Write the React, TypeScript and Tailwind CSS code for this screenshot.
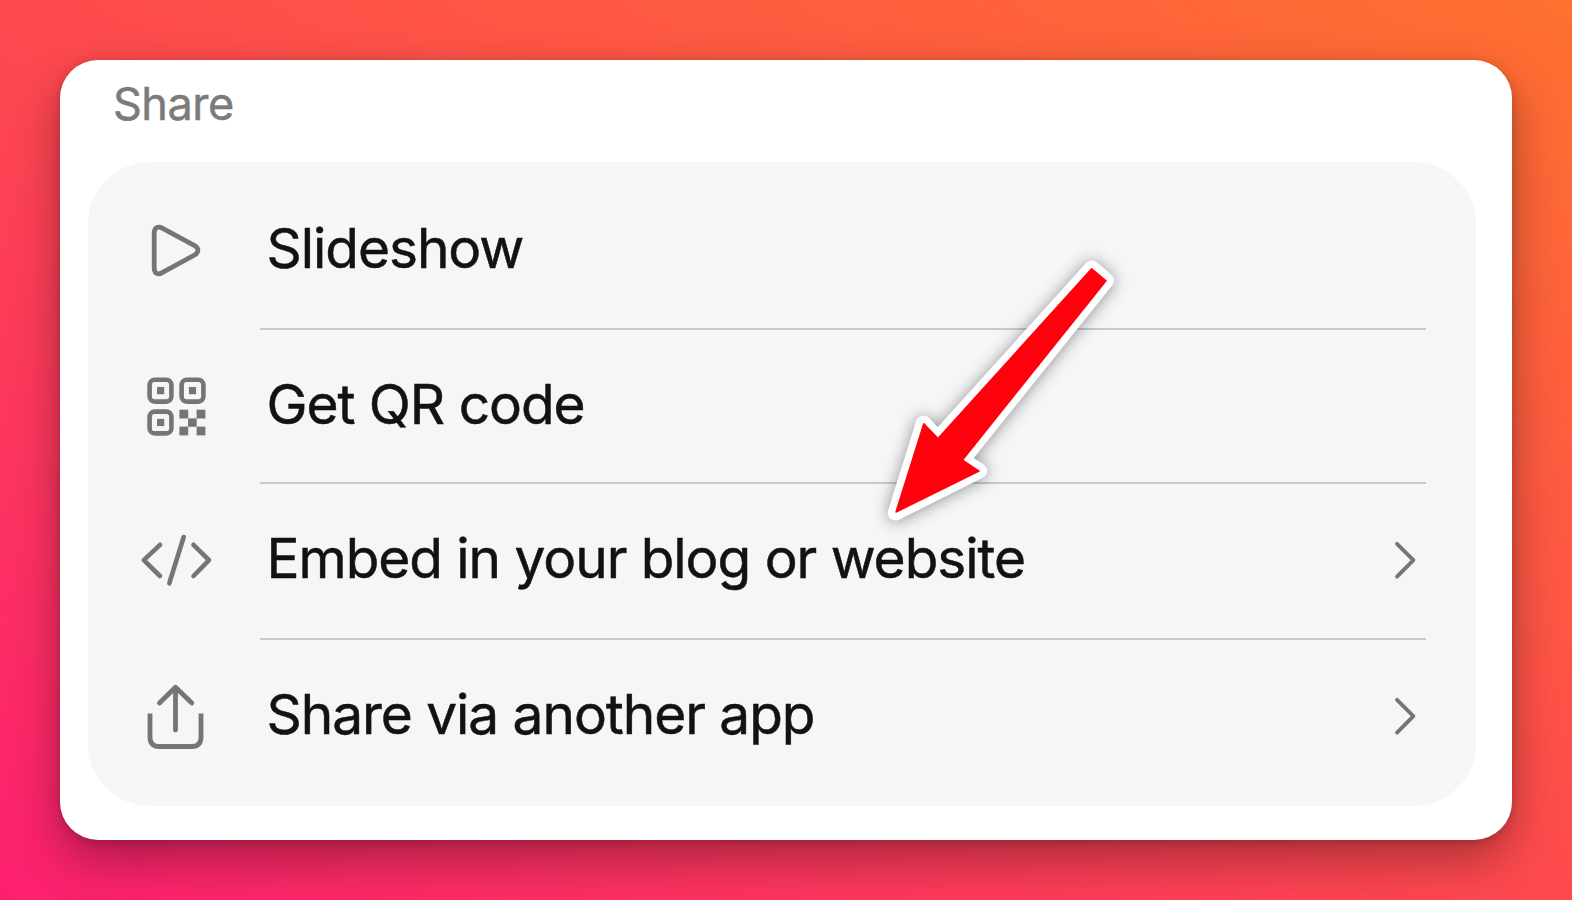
import type { FC, ReactNode } from "react";

interface MenuItem {
  name: string;
  icon: ReactNode;
  className: string;
  hasSubmenu?: boolean;
}

interface IconProps {
  children: ReactNode;
}

const Icon: FC<IconProps> = ({ children }) => (
  <svg
    width="80"
    height="80"
    viewBox="0 0 80 80"
    fill="none"
    stroke="#737674"
    strokeWidth="4.8"
    strokeLinecap="round"
    strokeLinejoin="round"
    className="shrink-0"
  >
    {children}
  </svg>
);

const PlayIcon = () => (
  <Icon>
    <path d="M18.2 24.3C18.2 19 21.6 16.8 26.2 19.1L58.6 36.6C63 39 63 43.6 58.6 46L26.2 63.6C21.6 66.4 18.2 64.2 18.2 59Z" />
  </Icon>
);

const QrIcon = () => (
  <Icon>
    <g strokeWidth="4.6">
      <rect x="13.6" y="14.8" width="21.8" height="21.8" rx="5" />
      <rect x="45.6" y="14.8" width="21.8" height="21.8" rx="5" />
      <rect x="13.6" y="46.6" width="21.8" height="21.8" rx="5" />
    </g>
    <g fill="#737674" stroke="none">
      <rect x="21" y="22" width="7.2" height="7.2" />
      <rect x="52.9" y="22" width="7.2" height="7.2" />
      <rect x="21" y="53.9" width="7.2" height="7.2" />
      <rect x="43.4" y="44.7" width="8.8" height="8.8" />
      <rect x="60.6" y="44.7" width="8.8" height="8.8" />
      <rect x="52.1" y="53.4" width="8.6" height="8.4" />
      <rect x="43.4" y="61.6" width="8.8" height="8.8" />
      <rect x="60.6" y="61.6" width="8.8" height="8.8" />
    </g>
  </Icon>
);

const CodeIcon = () => (
  <Icon>
    <g strokeWidth="4.6">
      <path d="M24 25.8L7.8 41.2L24 57" />
      <path d="M47.7 18L33.3 64.3" />
      <path d="M57.5 25.8L73 41.2L57.5 57" />
    </g>
  </Icon>
);

const ShareIcon = () => (
  <Icon>
    <path
      d="M14 38.5V62.5C14 68.3 17.3 71.5 23 71.5H56C61.7 71.5 65 68.3 65 62.5V38.5"
      strokeLinecap="butt"
    />
    <path d="M39.5 12.3V55M23.5 28L39.5 12.3L55.8 28" />
  </Icon>
);

const ChevronIcon = () => (
  <svg
    width="40"
    height="80"
    viewBox="0 0 40 80"
    fill="none"
    stroke="#737674"
    strokeWidth="3.8"
    strokeLinecap="round"
    strokeLinejoin="round"
    className="shrink-0"
  >
    <path d="M11 24.8L27.4 41.2L11 57.6" />
  </svg>
);

const menuItems: MenuItem[] = [
  { name: "Slideshow", icon: <PlayIcon />, className: "h-[156px]" },
  { name: "Get QR code", icon: <QrIcon />, className: "h-[154px]" },
  {
    name: "Embed in your blog or website",
    icon: <CodeIcon />,
    className: "h-[156px]",
    hasSubmenu: true,
  },
  {
    name: "Share via another app",
    icon: <ShareIcon />,
    className: "h-[156px]",
    hasSubmenu: true,
  },
];

const PointerArrow = () => (
  <svg
    width="260"
    height="300"
    viewBox="0 0 260 300"
    className="absolute left-[870px] top-[240px] pointer-events-none drop-shadow-[0_1px_8px_rgba(0,0,0,0.42)]"
  >
    <path
      d="M221.7 28.3L236.3 40.5L92.3 220L109.3 230.8L25.5 272.7L53.5 183.3L68 198.5Z"
      fill="white"
      stroke="white"
      strokeWidth="15.5"
      strokeLinejoin="round"
    />
    <path
      d="M221.7 28.7L236 40.7L92.5 220L109 231L26 272L53.8 183.8L68 198.5Z"
      fill="#ff000d"
      stroke="#ff000d"
      strokeWidth="1.5"
      strokeLinejoin="round"
    />
  </svg>
);

const App: FC = () => {
  return (
    <div className="relative w-[1572px] h-[900px] overflow-hidden p-[60px] bg-[linear-gradient(to_top_right,#fc1f6f_0%,#fe4a4e_50%,#ff7030_100%)] font-['Inter',sans-serif]">
      <section className="h-[780px] rounded-[38px] bg-white pl-7 pr-9 shadow-[0_20px_48px_rgba(0,0,0,0.33),0_2px_8px_rgba(0,0,0,0.18)]">
        <h2 className="h-[102px] pl-[25px] pt-[14px] text-[45px] leading-[60px] tracking-[-0.5px] text-[#7b7b7b] [-webkit-text-stroke:0.5px_#7b7b7b]">
          Share
        </h2>

        <ul className="h-[644px] rounded-[62px] bg-[#f4f6f8] pt-3 pl-12 pr-[50px]">
          {menuItems.map((item, index) => (
            <li key={item.name} className={`flex ${item.className}`}>
              <div className="w-[124px] pt-[35px]">{item.icon}</div>
              <div
                className={`flex flex-1 items-start justify-between pl-[6.5px] ${
                  index < menuItems.length - 1
                    ? "border-b-2 border-[#c7c9cb]"
                    : ""
                }`}
              >
                <span className="pt-[38px] text-[55px] leading-[72px] tracking-[-1.05px] text-[#111212] whitespace-nowrap [-webkit-text-stroke:0.5px_#111212]">
                  {item.name}
                </span>
                {item.hasSubmenu && (
                  <div className="pt-[35px]">
                    <ChevronIcon />
                  </div>
                )}
              </div>
            </li>
          ))}
        </ul>
      </section>

      <PointerArrow />
    </div>
  );
};

export default App;
